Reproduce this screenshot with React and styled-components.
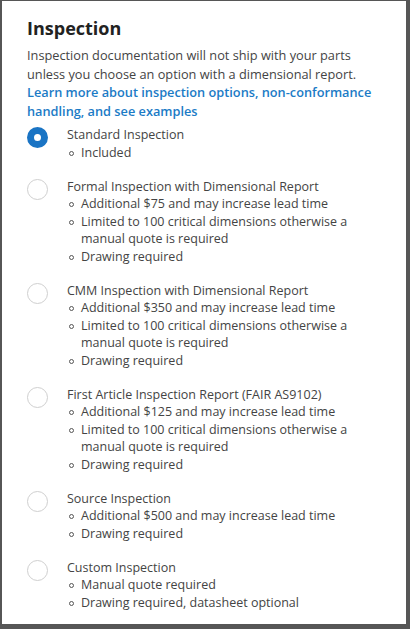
import React, { useState } from 'react';
import styled, { createGlobalStyle } from 'styled-components';

const Global = createGlobalStyle`
  html, body { margin: 0; padding: 0; background: #fff; }
  body { font-family: "Open Sans", "Noto Sans", sans-serif; }
`;

const Panel = styled.div`
  box-sizing: border-box;
  width: 410px;
  height: 629px;
  border-style: solid;
  border-color: #565656;
  border-width: 1px 4px 5px 2px;
  padding: 14px 30px 0 25px;
  background: #fff;
  overflow: hidden;
`;

const Title = styled.h2`
  margin: 0 0 5px;
  font-size: 18px;
  font-weight: 700;
  color: #222;
  line-height: 26px;
`;

const Intro = styled.p`
  margin: 0 0 6px;
  font-size: 12.75px;
  line-height: 18.5px;
  color: #444;
`;

const LearnLink = styled.a`
  color: #1b7bc6;
  font-weight: 600;
  text-decoration: none;
  cursor: pointer;
`;

const Options = styled.div`
  display: flex;
  flex-direction: column;
  gap: 16.5px;
`;

const Option = styled.label`
  display: flex;
  align-items: flex-start;
  cursor: pointer;
`;

const Radio = styled.span`
  box-sizing: border-box;
  flex: none;
  width: 21px;
  height: 21px;
  margin: 1px 19px 0 0;
  border-radius: 50%;
  border: ${p => (p.checked ? '7px solid #1a74c4' : '1.5px solid #cfcfcf')};
  background: #fff;
`;

const Body = styled.div`
  font-size: 12.5px;
  line-height: 17.5px;
  color: #444;
`;

const OptionName = styled.div``;

const Bullets = styled.ul`
  margin: 0;
  padding: 0 0 0 14px;
  list-style: none;
`;

const Bullet = styled.li`
  position: relative;
  &::before {
    content: '';
    position: absolute;
    left: -12px;
    top: 7px;
    width: 3px;
    height: 3px;
    border: 1px solid #555;
    border-radius: 50%;
  }
`;

const options = [
  { name: 'Standard Inspection', items: ['Included'] },
  {
    name: 'Formal Inspection with Dimensional Report',
    items: [
      'Additional $75 and may increase lead time',
      'Limited to 100 critical dimensions otherwise a manual quote is required',
      'Drawing required',
    ],
  },
  {
    name: 'CMM Inspection with Dimensional Report',
    items: [
      'Additional $350 and may increase lead time',
      'Limited to 100 critical dimensions otherwise a manual quote is required',
      'Drawing required',
    ],
  },
  {
    name: 'First Article Inspection Report (FAIR AS9102)',
    items: [
      'Additional $125 and may increase lead time',
      'Limited to 100 critical dimensions otherwise a manual quote is required',
      'Drawing required',
    ],
  },
  {
    name: 'Source Inspection',
    items: ['Additional $500 and may increase lead time', 'Drawing required'],
  },
  {
    name: 'Custom Inspection',
    items: ['Manual quote required', 'Drawing required, datasheet optional'],
  },
];

export default function App() {
  const [selected, setSelected] = useState(0);
  return (
    <>
      <Global />
      <Panel>
        <Title>Inspection</Title>
        <Intro>
          Inspection documentation will not ship with your parts unless you choose an option with a
          dimensional report.{' '}
          <LearnLink>Learn more about inspection options, non-conformance handling, and see examples</LearnLink>
        </Intro>
        <Options>
          {options.map((o, i) => (
            <Option key={o.name} onClick={() => setSelected(i)}>
              <Radio checked={selected === i} />
              <Body>
                <OptionName>{o.name}</OptionName>
                <Bullets>
                  {o.items.map(t => (
                    <Bullet key={t}>{t}</Bullet>
                  ))}
                </Bullets>
              </Body>
            </Option>
          ))}
        </Options>
      </Panel>
    </>
  );
}
